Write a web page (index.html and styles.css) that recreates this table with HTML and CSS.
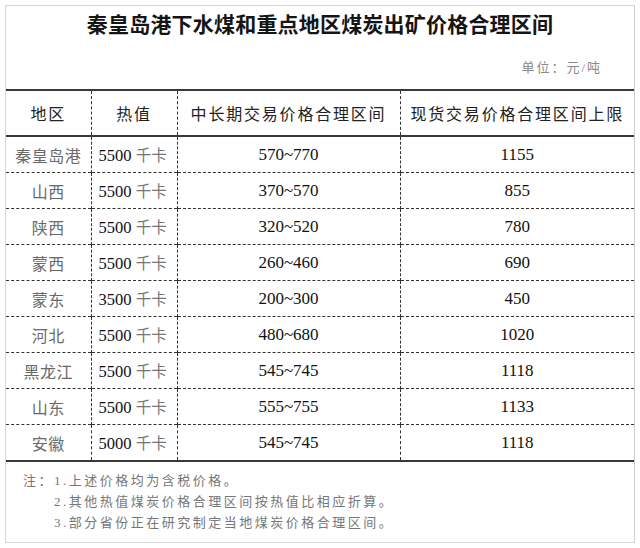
FILE: index.html
```html
<!DOCTYPE html>
<html lang="zh-CN">
<head>
<meta charset="utf-8">
<title>秦皇岛港下水煤和重点地区煤炭出矿价格合理区间</title>
<link rel="stylesheet" href="styles.css">
</head>
<body>
<div class="frame">
  <div class="head">
    <h1 class="title">秦皇岛港下水煤和重点地区煤炭出矿价格合理区间</h1>
    <div class="unit">单位：元/吨</div>
  </div>
  <table class="price">
    <colgroup>
      <col class="c1"><col class="c2"><col class="c3"><col class="c4">
    </colgroup>
    <thead>
      <tr><th>地区</th><th>热值</th><th>中长期交易价格合理区间</th><th>现货交易价格合理区间上限</th></tr>
    </thead>
    <tbody>
      <tr><td class="area">秦皇岛港</td><td class="heat">5500 <span class="kc">千卡</span></td><td class="num">570~770</td><td class="num">1155</td></tr>
      <tr><td class="area">山西</td><td class="heat">5500 <span class="kc">千卡</span></td><td class="num">370~570</td><td class="num">855</td></tr>
      <tr><td class="area">陕西</td><td class="heat">5500 <span class="kc">千卡</span></td><td class="num">320~520</td><td class="num">780</td></tr>
      <tr><td class="area">蒙西</td><td class="heat">5500 <span class="kc">千卡</span></td><td class="num">260~460</td><td class="num">690</td></tr>
      <tr><td class="area">蒙东</td><td class="heat">3500 <span class="kc">千卡</span></td><td class="num">200~300</td><td class="num">450</td></tr>
      <tr><td class="area">河北</td><td class="heat">5500 <span class="kc">千卡</span></td><td class="num">480~680</td><td class="num">1020</td></tr>
      <tr><td class="area">黑龙江</td><td class="heat">5500 <span class="kc">千卡</span></td><td class="num">545~745</td><td class="num">1118</td></tr>
      <tr><td class="area">山东</td><td class="heat">5500 <span class="kc">千卡</span></td><td class="num">555~755</td><td class="num">1133</td></tr>
      <tr><td class="area">安徽</td><td class="heat">5000 <span class="kc">千卡</span></td><td class="num">545~745</td><td class="num">1118</td></tr>
    </tbody>
  </table>
  <div class="notes">
    <div class="label">注：</div>
    <div class="lines">
      <div>1.上述价格均为含税价格。</div>
      <div>2.其他热值煤炭价格合理区间按热值比相应折算。</div>
      <div>3.部分省份正在研究制定当地煤炭价格合理区间。</div>
    </div>
  </div>
</div>
</body>
</html>
```

FILE: styles.css
```css
html, body {
  margin: 0;
  padding: 0;
  background: #fff;
}
body {
  font-family: "Liberation Serif", "Noto Sans CJK SC", serif;
  color: #111;
}
.frame {
  margin: 5px 0 0 5px;
  width: 628px;
  height: 536px;
  border: 1px solid #d6d6d6;
  border-right-color: #cfcfcf;
  display: flex;
  flex-direction: column;
}
.head {
  height: 83px;
  box-sizing: border-box;
  padding-top: 5px;
}
.title {
  margin: 0;
  text-align: center;
  font-family: "Noto Sans CJK SC", sans-serif;
  font-weight: 700;
  font-size: 21px;
  line-height: 24px;
  letter-spacing: 0.2px;
  color: #151515;
}
.unit {
  margin-top: 25px;
  text-align: right;
  padding-right: 32px;
  font-family: "Liberation Serif", "Noto Sans CJK SC", serif;
  font-size: 13px;
  line-height: 16px;
  letter-spacing: 2px;
  color: #8a8a8a;
}
.price {
  width: 628px;
  table-layout: fixed;
  border-collapse: collapse;
}
.c1 { width: 85px; }
.c2 { width: 86px; }
.c3 { width: 223px; }
.c4 { width: 234px; }
.price th,
.price td {
  padding: 0;
  border-left: 1px dashed #333;
  border-top: 1px dashed #333;
}
.price tr > :first-child { border-left: none; }
.price th {
  height: 44px;
  border-top: 2px solid #3a3a3a;
  border-bottom: 2px solid #3a3a3a;
  font-family: "Noto Sans CJK SC", sans-serif;
  font-weight: 400;
  font-size: 16px;
  letter-spacing: 1.8px;
  color: #222;
  text-align: center;
}
.price tbody tr:first-child td { border-top: none; }
.price tbody tr:last-child td { border-bottom: 2px solid #3a3a3a; }
.price td {
  height: 35px;
  font-size: 17px;
}
.price td.area {
  text-align: center;
  font-family: "Noto Sans CJK SC", sans-serif;
  font-size: 16px;
  font-weight: 400;
  letter-spacing: 0.5px;
  color: #6a6a6a;
}
.price td.heat {
  padding-left: 7px;
  font-size: 16.5px;
  color: #111;
}
.kc {
  font-family: "Noto Sans CJK SC", sans-serif;
  font-size: 15.5px;
  color: #777;
}
.num {
  text-align: center;
  color: #111;
}
.notes {
  display: flex;
  padding: 8px 0 0 17px;
  font-size: 13px;
  line-height: 21px;
  letter-spacing: 2.5px;
  color: #777;
}
```
